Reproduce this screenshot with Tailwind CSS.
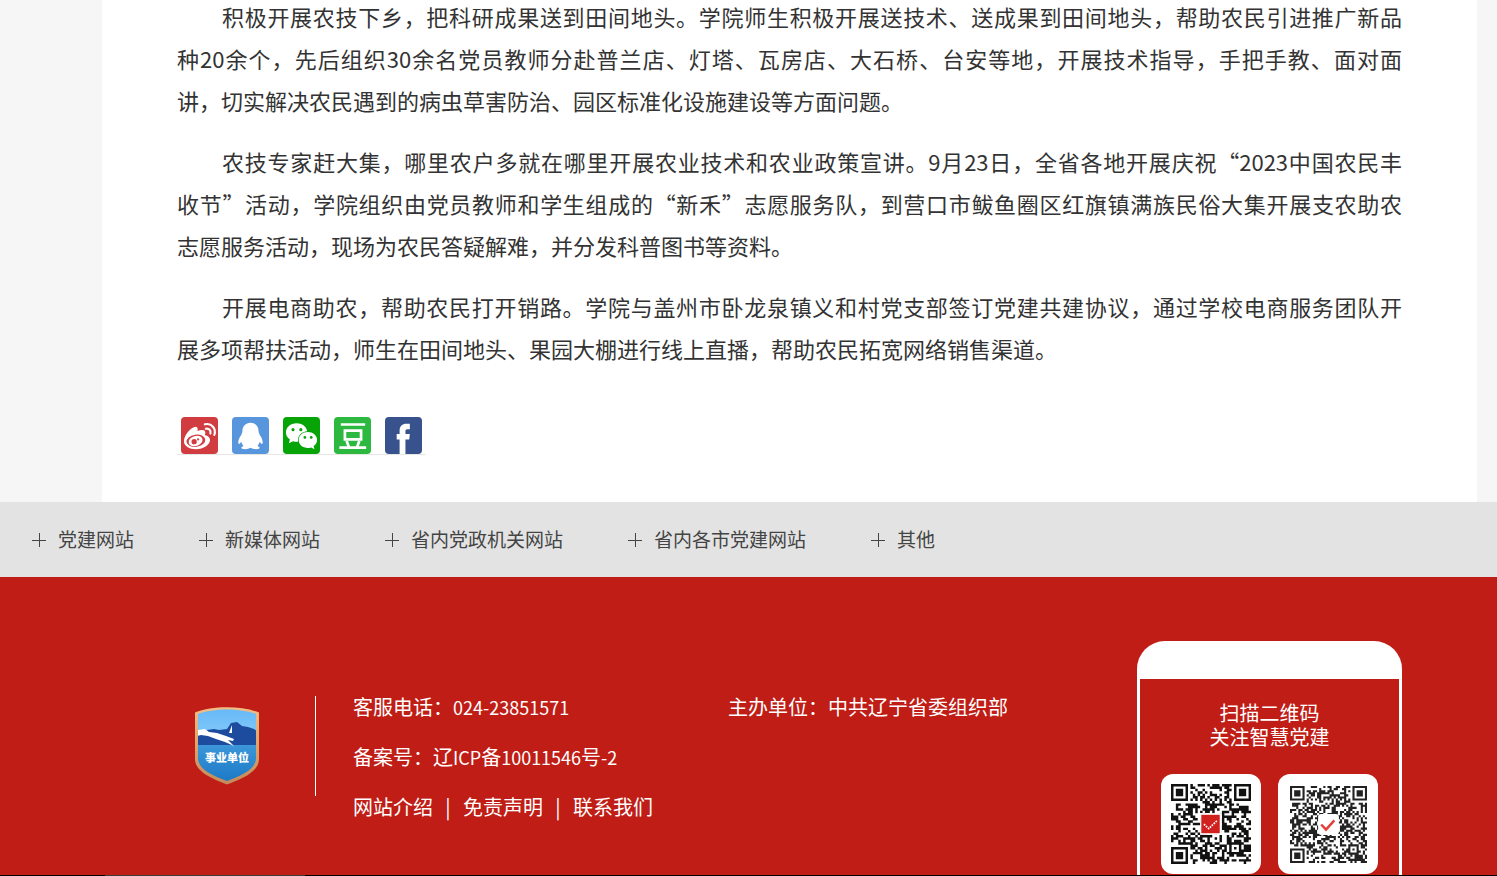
<!DOCTYPE html>
<html lang="zh-CN">
<head>
<meta charset="utf-8">
<meta name="viewport" content="width=device-width, initial-scale=1">
<title>智慧党建</title>
<script src="https://cdn.jsdelivr.net/npm/@tailwindcss/browser@4"></script>
</head>
<body class="bg-[#f6f6f6] font-['Noto_Sans_CJK_SC',sans-serif] text-[#333]">
<div class="overflow-hidden">
<main class="ml-[102px] mr-5 bg-white px-[75px] pb-[47px]">
  <article class="-mt-[5px] flex flex-col gap-[19px] text-[22px] leading-[42px]">
    <p>
      <span class="block pl-[45px] text-justify [text-align-last:justify]">积极开展农技下乡，把科研成果送到田间地头。学院师生积极开展送技术、送成果到田间地头，帮助农民引进推广新品</span>
      <span class="block text-justify [text-align-last:justify]">种20余个，先后组织30余名党员教师分赴普兰店、灯塔、瓦房店、大石桥、台安等地，开展技术指导，手把手教、面对面</span>
      <span class="block">讲，切实解决农民遇到的病虫草害防治、园区标准化设施建设等方面问题。</span>
    </p>
    <p>
      <span class="block pl-[45px] text-justify [text-align-last:justify]">农技专家赶大集，哪里农户多就在哪里开展农业技术和农业政策宣讲。9月23日，全省各地开展庆祝“2023中国农民丰</span>
      <span class="block text-justify [text-align-last:justify]">收节”活动，学院组织由党员教师和学生组成的“新禾”志愿服务队，到营口市鲅鱼圈区红旗镇满族民俗大集开展支农助农</span>
      <span class="block">志愿服务活动，现场为农民答疑解难，并分发科普图书等资料。</span>
    </p>
    <p>
      <span class="block pl-[45px] text-justify [text-align-last:justify]">开展电商助农，帮助农民打开销路。学院与盖州市卧龙泉镇义和村党支部签订党建共建协议，通过学校电商服务团队开</span>
      <span class="block">展多项帮扶活动，师生在田间地头、果园大棚进行线上直播，帮助农民拓宽网络销售渠道。</span>
    </p>
  </article>

  <div class="mt-12 flex w-fit gap-[14px] border-b border-[#e6e6e6] px-1">
    <a href="#" aria-label="分享到微博"><svg class="block size-[37px]" viewBox="0 0 38 38"><rect width="38" height="38" rx="4" fill="#d13c40"/><path fill="#fff" d="M15 10c2 0 2.400 2 2 4.400 4-1.600 8-1.500 8 1.600 0 1-.3 1.600-.5 2.400 3 .8 5.300 2.600 5.300 5.200 0 5-6.800 9.400-14.300 9.400C8.500 33 3 29.500 3 24.800 3 19 10.500 10 15 10z"/><ellipse cx="15.300" cy="24.400" rx="9.700" ry="6.300" fill="#d13c40" transform="rotate(-8 15.300 24.400)"/><ellipse cx="15" cy="24.600" rx="7.300" ry="5.200" fill="#fff" transform="rotate(-18 15 24.600)"/><circle cx="13.500" cy="25.300" r="2.700" fill="#d13c40"/><circle cx="17.600" cy="23" r="1.100" fill="#d13c40"/><path d="M24.500 7.500c7-1.600 12 4.500 9.700 11M25.500 12c3.500-.7 5.500 2 4.700 5" fill="none" stroke="#fff" stroke-width="2.200" stroke-linecap="round"/></svg></a>
    <a href="#" aria-label="分享到QQ"><svg class="block size-[37px]" viewBox="0 0 38 38"><rect width="38" height="38" rx="4" fill="#5795dc"/><path fill="#fff" d="M19 6c-5.400 0-8.500 4-8.300 9 0 1-.9 1.900-1 3.300C7.500 21 6 24.500 6.600 27c.4 1.300 1.700.5 3-1.500.3 1.700 1.200 3 2.300 4.200-1.800.6-2.700 1.600-2.100 2.500 1.200 1.400 7.200 1 9.200-.5 2 1.500 8 1.900 9.200.5.600-.9-.3-1.900-2.100-2.500 1.100-1.200 2-2.500 2.300-4.200 1.300 2 2.600 2.800 3 1.500.6-2.500-.9-6-3.100-8.700-.1-1.400-1-2.300-1-3.300.2-5-2.900-9-8.300-9z"/></svg></a>
    <a href="#" aria-label="分享到微信"><svg class="block size-[37px]" viewBox="0 0 38 38"><rect width="38" height="38" rx="4" fill="#06a406"/><path fill="#fff" d="M14 6.500C7.500 6.500 3 10.700 3 16c0 3 1.600 5.400 4.100 7.200L6 27l4.300-2.200c1.700.5 3.400.7 5.200.5-.9-6 4-10.500 9.300-10.700C23.800 9.500 19.500 6.500 14 6.500z"/><path fill="#fff" d="M25.500 15.500c-5.300 0-9.400 3.500-9.400 8.100s4.100 8.200 9.400 8.200c1.200 0 2.400-.2 3.400-.6l3.400 1.900-.9-3.200c2.200-1.500 3.600-3.700 3.600-6.300 0-4.600-4.200-8.100-9.500-8.100z"/><g fill="#06a406"><circle cx="10.300" cy="13" r="1.600"/><circle cx="18.300" cy="13" r="1.600"/><circle cx="22.500" cy="21" r="1.400"/><circle cx="29" cy="21" r="1.400"/></g></svg></a>
    <a href="#" aria-label="分享到豆瓣"><svg class="block size-[37px]" viewBox="0 0 38 38"><rect width="38" height="38" rx="4" fill="#2db840"/><g fill="none" stroke="#fff" stroke-width="2.800"><path d="M7 7.700h25M5.500 31.500h27.500M13 24.500l2.500 7M26 24.500l-2.500 7"/><path d="M11.200 14h16.600v9H11.200z"/></g></svg></a>
    <a href="#" aria-label="分享到Facebook"><svg class="block size-[37px]" viewBox="0 0 38 38"><rect width="38" height="38" rx="4" fill="#37528d"/><path fill="#fff" d="M15 38V23h-3v-5.500h3V14c0-4.700 2.700-7 7-7h3.500v5.500H23c-1.500 0-2 .7-2 2v3h4.500l-.6 5.500H21v15z"/></svg></a>
  </div>
</main>

<nav aria-label="友情链接" class="flex h-[75px] items-center gap-[65px] bg-[#e3e3e3] pl-8 text-[19px] text-[#444]">
  <button type="button" class="flex items-center gap-3 whitespace-nowrap"><svg class="size-[14px]" viewBox="0 0 14 14" stroke="#444"><path d="M0 7.500h14M7.500 0v14"/></svg>党建网站</button>
  <button type="button" class="flex items-center gap-3 whitespace-nowrap"><svg class="size-[14px]" viewBox="0 0 14 14" stroke="#444"><path d="M0 7.500h14M7.500 0v14"/></svg>新媒体网站</button>
  <button type="button" class="flex items-center gap-3 whitespace-nowrap"><svg class="size-[14px]" viewBox="0 0 14 14" stroke="#444"><path d="M0 7.500h14M7.500 0v14"/></svg>省内党政机关网站</button>
  <button type="button" class="flex items-center gap-3 whitespace-nowrap"><svg class="size-[14px]" viewBox="0 0 14 14" stroke="#444"><path d="M0 7.500h14M7.500 0v14"/></svg>省内各市党建网站</button>
  <button type="button" class="flex items-center gap-3 whitespace-nowrap"><svg class="size-[14px]" viewBox="0 0 14 14" stroke="#444"><path d="M0 7.500h14M7.500 0v14"/></svg>其他</button>
</nav>

<footer class="bg-[#bf1d15] text-[20px] text-white">
  <div class="flex items-start pl-[194px] pr-[95px] pt-16">
    <svg class="mt-16 h-20 w-[66px] shrink-0" viewBox="0 0 66 80" role="img" aria-label="事业单位">
      <defs>
        <linearGradient id="sky" x2="0" y2="1"><stop stop-color="#62b6f8"/><stop offset=".5" stop-color="#78c3f8"/></linearGradient>
        <linearGradient id="sea" x2="0" y2="1"><stop stop-color="#3c96d8"/><stop offset="1" stop-color="#1877c4"/></linearGradient>
        <linearGradient id="rim" x2="0" y2="1"><stop stop-color="#f2bd84"/><stop offset="1" stop-color="#c48a59"/></linearGradient>
        <clipPath id="shield"><path d="M4 9C20 3 46 3 62 9V53C62 65 46 71 33 76 20 71 4 65 4 53z"/></clipPath>
      </defs>
      <path fill="url(#rim)" d="M1 7.500C18 .5 48 .5 65 7.500V54C65 67 47 74 33 79.500 19 74 1 67 1 54z"/>
      <g clip-path="url(#shield)">
        <path fill="url(#sky)" d="M0 0h66v42H0z"/><path fill="url(#sea)" d="M0 40h66v40H0z"/>
        <path fill="#1d4c9e" d="M4 28l9-3 7-1 5 1 8-1 4-6 6-1 5 4 6 1 6 2 4 3v13H4z"/>
        <path fill="#fff" d="M4 25l7-1 4 3 8 1 9 3 8 3-1 2-5-1 6 6-9-4-9-3-8-3-7-1-4 1zM35 28l3-8v8z"/>
      </g>
      <text x="33" y="57" text-anchor="middle" font-size="11" font-weight="900" fill="#fff">事业单位</text>
    </svg>
    <div class="ml-[55px] mt-[55px] h-[100px] w-px shrink-0 bg-white"></div>
    <div class="ml-[37px] mt-[41px] grid flex-1 grid-cols-[375px_1fr] whitespace-nowrap leading-[50px]">
      <p>客服电话：<span class="text-[18px]">024-23851571</span></p>
      <p>主办单位：中共辽宁省委组织部</p>
      <p class="col-span-2">备案号：辽<span class="text-[18px]">ICP</span>备<span class="text-[18px]">10011546</span>号<span class="text-[18px]">-2</span></p>
      <p class="col-span-2 flex"><a href="#">网站介绍</a><span class="w-[30px] text-center">|</span><a href="#">免责声明</a><span class="w-[30px] text-center">|</span><a href="#">联系我们</a></p>
    </div>
    <section class="w-[265px] shrink-0 rounded-t-[28px] border-x-[3px] border-t-[38px] border-white pb-px">
      <h2 class="pt-[22px] text-center leading-6"><span class="block">扫描二维码</span><span class="block">关注智慧党建</span></h2>
      <div class="mt-[25px] flex justify-center gap-[17px]">
        <div class="size-[100px] rounded-[12px] bg-white p-[10px]"><svg class="size-20" viewBox="0 0 33 33" role="img" aria-label="智慧党建应用二维码"><path id="qr-a" fill="#111"/><path fill="#fff" d="M12 12h9v9h-9z"/><path fill="#d0211e" d="M12.500 12.700h7.600v7.600h-7.600z"/><path d="M13.600 16.600l2 1.800 3.500-3.400" fill="none" stroke="#fff" stroke-width=".7" stroke-dasharray=".7 .4"/></svg></div>
        <div class="size-[100px] rounded-[12px] bg-white p-3"><svg class="size-[77px]" viewBox="0 0 37 37" role="img" aria-label="智慧党建公众号二维码"><path id="qr-b" fill="#222"/><rect x="13.500" y="13.500" width="10" height="10" rx="1.500" fill="#fff"/><path d="M15 18.500l2.300 2.500 4-4.500" fill="none" stroke="#e3403a" stroke-width="1.200"/></svg></div>
      </div>
    </section>
  </div>
  <div class="h-px bg-black pl-[105px]"><div class="h-px w-[200px] bg-[#3c3c3c]"></div></div>
</footer>
</div>
<script>
  // Fills a path with square modules: three finder marks, timing rows, one alignment mark and data cells.
  function drawCode(id, n, seed) {
    const ring = (x, y, cx, cy) => Math.max(Math.abs(x - cx), Math.abs(y - cy));
    let d = '';
    for (let y = 0; y < n; y++) for (let x = 0; x < n; x++) {
      seed = (seed * 1664525 + 1013904223) >>> 0;
      let on = (seed >>> 16) % 100 < 51;
      if (x === 6 || y === 6) on = (x + y) % 2 === 0;
      const a = ring(x, y, n - 7, n - 7);
      if (a < 3) on = a !== 1;
      for (const [cx, cy] of [[3, 3], [n - 4, 3], [3, n - 4]]) {
        const f = ring(x, y, cx, cy);
        if (f < 5) on = f === 3 || f < 2;
      }
      if (on) d += `M${x} ${y}h1.020v1.020h-1.020z`;
    }
    document.getElementById(id).setAttribute('d', d);
  }
  drawCode('qr-a', 33, 20231);
  drawCode('qr-b', 37, 9923);
</script>
</body>
</html>
